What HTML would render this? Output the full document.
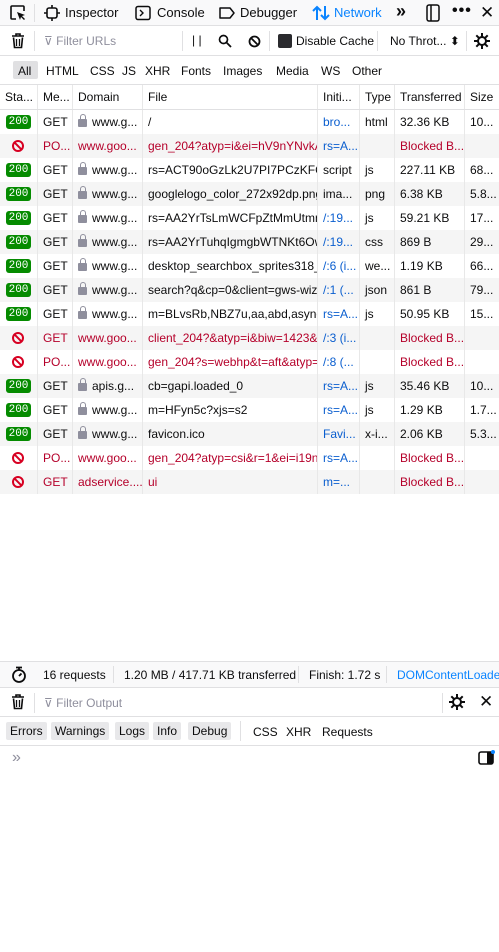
<!DOCTYPE html>
<html><head><meta charset="utf-8"><style>
*{margin:0;padding:0;box-sizing:border-box}
body{width:499px;height:952px;overflow:hidden;background:#fff;font-family:"Liberation Sans","DejaVu Sans",sans-serif;font-size:12px;color:#0c0c0d;position:relative}
.abs{position:absolute}
.bar{position:absolute;left:0;width:499px;border-bottom:1px solid #e0e0e2}
.t{position:absolute;white-space:nowrap}
.sep{position:absolute;width:1px;background:#e0e0e2}
.row{position:absolute;left:0;width:499px;height:24px}
.row.g{background:#f5f5f5}
.c{position:absolute;top:0;height:24px;line-height:24px;overflow:hidden;white-space:nowrap;padding-left:5px;border-right:1px solid #e8e8e8}
.badge{position:absolute;left:6px;top:5px;width:25px;height:14px;background:#058b00;color:#fff;border-radius:3px;font-family:"Liberation Mono",monospace;font-size:11px;line-height:14px;text-align:center}
.blk{position:absolute;left:12px;top:6px;width:12px;height:12px;border:2px solid #d70022;border-radius:50%}
.blk:after{content:"";position:absolute;left:-1px;top:3px;width:10px;height:2px;background:#d70022;transform:rotate(45deg)}
.lock{display:inline-block;width:9px;height:8px;background:#8f8f9d;border-radius:1px;position:relative;margin-right:5px;top:1px}
.lock:before{content:"";position:absolute;left:1.5px;top:-5px;width:6px;height:6px;border:1.5px solid #8f8f9d;border-bottom:none;border-radius:3px 3px 0 0;box-sizing:border-box}
.red{color:#b5002a}.blue{color:#0a5ecf}
.btn{position:absolute;top:722px;height:18px;line-height:18px;background:#e8e8ea;padding:0 4px;border-radius:2px}
</style></head><body>
<svg width="0" height="0" style="position:absolute"><defs><g id="gear"><circle cx="8" cy="8" r="4" fill="none" stroke="#0c0c0d" stroke-width="2"/><path d="M8 0v4M8 12v4M0 8h4M12 8h4M2.3 2.3l2.8 2.8M10.9 10.9l2.8 2.8M13.7 2.3l-2.8 2.8M5.1 10.9l-2.8 2.8" stroke="#0c0c0d" stroke-width="2"/></g></defs></svg>
<!-- top toolbar -->
<div class="bar" style="top:0;height:26px;background:#f9f9fa"></div>
<svg class="abs" style="left:9px;top:4px" width="18" height="18" viewBox="0 0 18 18"><path d="M7 15H3a1 1 0 0 1-1-1V3a1 1 0 0 1 1-1h11a1 1 0 0 1 1 1v4" fill="none" stroke="#0c0c0d" stroke-width="1.6"/><path d="M8 8l8 3-3 1 3 3-1 1-3-3-1 3z" fill="#0c0c0d"/></svg>
<div class="sep" style="left:34px;top:4px;height:18px"></div>
<svg class="abs" style="left:44px;top:5px" width="16" height="16" viewBox="0 0 16 16"><rect x="3" y="3" width="10" height="10" rx="2" fill="none" stroke="#0c0c0d" stroke-width="1.6"/><path d="M8 0v3M8 13v3M0 8h3M13 8h3" stroke="#0c0c0d" stroke-width="1.6"/></svg>
<div class="t" style="left:65px;top:5px;font-size:13px">Inspector</div>
<svg class="abs" style="left:135px;top:5px" width="16" height="16" viewBox="0 0 16 16"><rect x="1" y="1.5" width="14" height="13" rx="2" fill="none" stroke="#0c0c0d" stroke-width="1.5"/><path d="M5 5l3 3-3 3" fill="none" stroke="#0c0c0d" stroke-width="1.4"/></svg>
<div class="t" style="left:157px;top:5px;font-size:13px">Console</div>
<svg class="abs" style="left:218px;top:5px" width="17" height="16" viewBox="0 0 17 16"><path d="M2 3h10l4 5-4 5H2z" fill="none" stroke="#0c0c0d" stroke-width="1.5" stroke-linejoin="round"/></svg>
<div class="t" style="left:240px;top:5px;font-size:13px">Debugger</div>
<svg class="abs" style="left:312px;top:5px" width="18" height="16" viewBox="0 0 18 16"><path d="M5 15V2M1 6l4-4 4 4M13 1v13M9 10l4 4 4-4" fill="none" stroke="#0a84ff" stroke-width="2"/></svg>
<div class="t" style="left:334px;top:5px;font-size:13px;color:#0a84ff">Network</div>
<div class="t" style="left:396px;top:1px;font-size:18px;font-weight:bold">»</div>
<svg class="abs" style="left:426px;top:4px" width="14" height="18" viewBox="0 0 14 18"><rect x="1" y="1" width="12" height="16" rx="2" fill="none" stroke="#0c0c0d" stroke-width="1.5"/><path d="M5 1v16" stroke="#0c0c0d" stroke-width="1.5"/></svg>
<div class="t" style="left:452px;top:2px;font-size:16px;font-weight:bold;letter-spacing:1px">•••</div>
<div class="t" style="left:480px;top:3px;font-size:17px">✕</div>
<!-- filter bar -->
<div class="bar" style="top:26px;height:30px"></div>
<svg class="abs" style="left:11px;top:33px" width="14" height="16" viewBox="0 0 14 16"><path d="M1 3h12M5 3V1h4v2M2.5 4.5l1 10h7l1-10" fill="none" stroke="#0c0c0d" stroke-width="1.6"/><path d="M5.5 6v7M8.5 6v7" stroke="#0c0c0d" stroke-width="1.3"/></svg>
<div class="sep" style="left:34px;top:31px;height:20px"></div>
<div class="t" style="left:44px;top:34px;color:#8f8f9d">⊽ Filter URLs</div>
<div class="sep" style="left:182px;top:31px;height:20px"></div>
<div class="t" style="left:192px;top:33px">| |</div>
<svg class="abs" style="left:218px;top:34px" width="14" height="14" viewBox="0 0 14 14"><circle cx="5.5" cy="5.5" r="4" fill="none" stroke="#0c0c0d" stroke-width="1.7"/><path d="M8.5 8.5l4.5 4.5" stroke="#0c0c0d" stroke-width="1.8"/></svg>
<svg class="abs" style="left:248px;top:35px" width="13" height="13" viewBox="0 0 13 13"><circle cx="6.5" cy="6.5" r="5" fill="none" stroke="#0c0c0d" stroke-width="1.8"/><path d="M3 3l7 7" stroke="#0c0c0d" stroke-width="1.8"/></svg>
<div class="sep" style="left:269px;top:31px;height:20px"></div>
<div class="abs" style="left:278px;top:34px;width:14px;height:14px;background:#2a2a2e;border-radius:2px"></div>
<div class="t" style="left:296px;top:34px">Disable Cache</div>
<div class="sep" style="left:377px;top:31px;height:20px"></div>
<div class="t" style="left:390px;top:34px">No Throt... ⬍</div>
<div class="sep" style="left:466px;top:31px;height:20px"></div>
<svg class="abs" style="left:474px;top:33px" width="16" height="16" viewBox="0 0 16 16"><use href="#gear"/></svg>
<!-- type filters -->
<div class="bar" style="top:56px;height:29px"></div>
<div class="abs" style="left:13px;top:61px;width:25px;height:18px;background:#e0e0e2;border-radius:2px"></div>
<div class="t" style="left:18px;top:64px">All</div>
<div class="t" style="left:46px;top:64px">HTML</div>
<div class="t" style="left:90px;top:64px">CSS</div>
<div class="t" style="left:122px;top:64px">JS</div>
<div class="t" style="left:145px;top:64px">XHR</div>
<div class="t" style="left:181px;top:64px">Fonts</div>
<div class="t" style="left:223px;top:64px">Images</div>
<div class="t" style="left:276px;top:64px">Media</div>
<div class="t" style="left:321px;top:64px">WS</div>
<div class="t" style="left:352px;top:64px">Other</div>
<!-- header -->
<div class="row" style="top:85px;height:25px;border-bottom:1px solid #e0e0e2">
<div class="c" style="left:0;width:38px">Sta...</div><div class="c" style="left:38px;width:35px">Me...</div><div class="c" style="left:73px;width:70px">Domain</div><div class="c" style="left:143px;width:175px">File</div><div class="c" style="left:318px;width:42px">Initi...</div><div class="c" style="left:360px;width:35px">Type</div><div class="c" style="left:395px;width:70px">Transferred</div><div class="c" style="left:465px;width:34px;border:none">Size</div>
</div>
<div id="rows"></div>
<!-- status bar -->
<div class="abs" style="left:0;top:661px;width:499px;height:27px;background:#f9f9fa;border-top:1px solid #e0e0e2;border-bottom:1px solid #e0e0e2"></div>
<svg class="abs" style="left:11px;top:666px" width="16" height="17" viewBox="0 0 16 17"><circle cx="8" cy="10" r="6" fill="none" stroke="#0c0c0d" stroke-width="1.8"/><path d="M5 1.5h6M8 2v2M8 10l2.5-2.5" stroke="#0c0c0d" stroke-width="1.8"/></svg>
<div class="t" style="left:43px;top:668px">16 requests</div>
<div class="sep" style="left:113px;top:666px;height:17px"></div>
<div class="t" style="left:124px;top:668px">1.20 MB / 417.71 KB transferred</div>
<div class="sep" style="left:298px;top:666px;height:17px"></div>
<div class="t" style="left:309px;top:668px">Finish: 1.72 s</div>
<div class="sep" style="left:386px;top:666px;height:17px"></div>
<div class="t" style="left:397px;top:668px;color:#0a84ff">DOMContentLoaded</div>
<!-- console toolbar -->
<div class="bar" style="top:689px;height:28px"></div>
<svg class="abs" style="left:11px;top:694px" width="14" height="16" viewBox="0 0 14 16"><path d="M1 3h12M5 3V1h4v2M2.5 4.5l1 10h7l1-10" fill="none" stroke="#0c0c0d" stroke-width="1.6"/><path d="M5.5 6v7M8.5 6v7" stroke="#0c0c0d" stroke-width="1.3"/></svg>
<div class="sep" style="left:34px;top:693px;height:20px"></div>
<div class="t" style="left:44px;top:696px;color:#8f8f9d">⊽ Filter Output</div>
<div class="sep" style="left:442px;top:693px;height:20px"></div>
<svg class="abs" style="left:449px;top:694px" width="16" height="16" viewBox="0 0 16 16"><use href="#gear"/></svg>
<div class="t" style="left:479px;top:692px;font-size:17px">✕</div>
<div class="bar" style="top:717px;height:29px"></div>
<div class="btn" style="left:6px">Errors</div>
<div class="btn" style="left:51px">Warnings</div>
<div class="btn" style="left:115px">Logs</div>
<div class="btn" style="left:153px">Info</div>
<div class="btn" style="left:188px">Debug</div>
<div class="sep" style="left:240px;top:721px;height:20px"></div>
<div class="t" style="left:253px;top:725px">CSS</div>
<div class="t" style="left:286px;top:725px">XHR</div>
<div class="t" style="left:322px;top:725px">Requests</div>
<div class="t" style="left:12px;top:749px;font-size:16px;color:#8f8f9d">»</div>
<svg class="abs" style="left:478px;top:750px" width="17" height="15" viewBox="0 0 17 15"><rect x="1" y="2" width="14" height="12" rx="2" fill="none" stroke="#0c0c0d" stroke-width="1.6"/><rect x="9" y="2" width="6" height="12" fill="#0c0c0d"/><circle cx="15" cy="2" r="2" fill="#0a84ff"/></svg>
<script>
const R=[
[1,"GET","www.g...","/","bro...","html","32.36 KB","10..."],
[0,"PO...","www.goo...","gen_204?atyp=i&ei=hV9nYNvkAa","rs=A...","","Blocked B...",""],
[1,"GET","www.g...","rs=ACT90oGzLk2U7PI7PCzKFG4Q","script","js","227.11 KB","68..."],
[1,"GET","www.g...","googlelogo_color_272x92dp.png","ima...","png","6.38 KB","5.8..."],
[1,"GET","www.g...","rs=AA2YrTsLmWCFpZtMmUtmnx","/:19...","js","59.21 KB","17..."],
[1,"GET","www.g...","rs=AA2YrTuhqIgmgbWTNKt6Owk","/:19...","css","869 B","29..."],
[1,"GET","www.g...","desktop_searchbox_sprites318_h","/:6 (i...","we...","1.19 KB","66..."],
[1,"GET","www.g...","search?q&cp=0&client=gws-wiz&","/:1 (...","json","861 B","79..."],
[1,"GET","www.g...","m=BLvsRb,NBZ7u,aa,abd,async,c","rs=A...","js","50.95 KB","15..."],
[0,"GET","www.goo...","client_204?&atyp=i&biw=1423&b","/:3 (i...","","Blocked B...",""],
[0,"PO...","www.goo...","gen_204?s=webhp&t=aft&atyp=c","/:8 (...","","Blocked B...",""],
[1,"GET","apis.g...","cb=gapi.loaded_0","rs=A...","js","35.46 KB","10..."],
[1,"GET","www.g...","m=HFyn5c?xjs=s2","rs=A...","js","1.29 KB","1.7..."],
[1,"GET","www.g...","favicon.ico","Favi...","x-i...","2.06 KB","5.3..."],
[0,"PO...","www.goo...","gen_204?atyp=csi&r=1&ei=i19nY(","rs=A...","","Blocked B...",""],
[0,"GET","adservice....","ui","m=...","","Blocked B...",""]];
const X=[0,38,73,143,318,360,395,465,499];
let h="";
const esc=s=>s.replace(/&/g,"&amp;").replace(/</g,"&lt;");
R.forEach((r,i)=>{
 const ok=r[0],cl=ok?"":"red";
 h+=`<div class="row${i%2?" g":""}" style="top:${110+i*24}px">`;
 h+=`<div class="c" style="left:0;width:38px">${ok?'<div class="badge">200</div>':'<div class="blk"></div>'}</div>`;
 const vals=[r[1],(ok?'<span class="lock"></span>':'')+esc(r[2]),esc(r[3]),esc(r[4]),r[5],r[6],r[7]];
 for(let k=0;k<7;k++){
  let c=cl; if(k==3)c=(r[4]=="script"||r[4]=="ima...")?"":"blue"; if(k==4||k==6)c=""; if(k==5&&!ok)c="red";
  h+=`<div class="c ${c}" style="left:${X[k+1]}px;width:${X[k+2]-X[k+1]}px${k==6?';border:none':''}">${vals[k]}</div>`;
 }
 h+="</div>";
});
document.getElementById("rows").innerHTML=h;
</script>
</body></html>
